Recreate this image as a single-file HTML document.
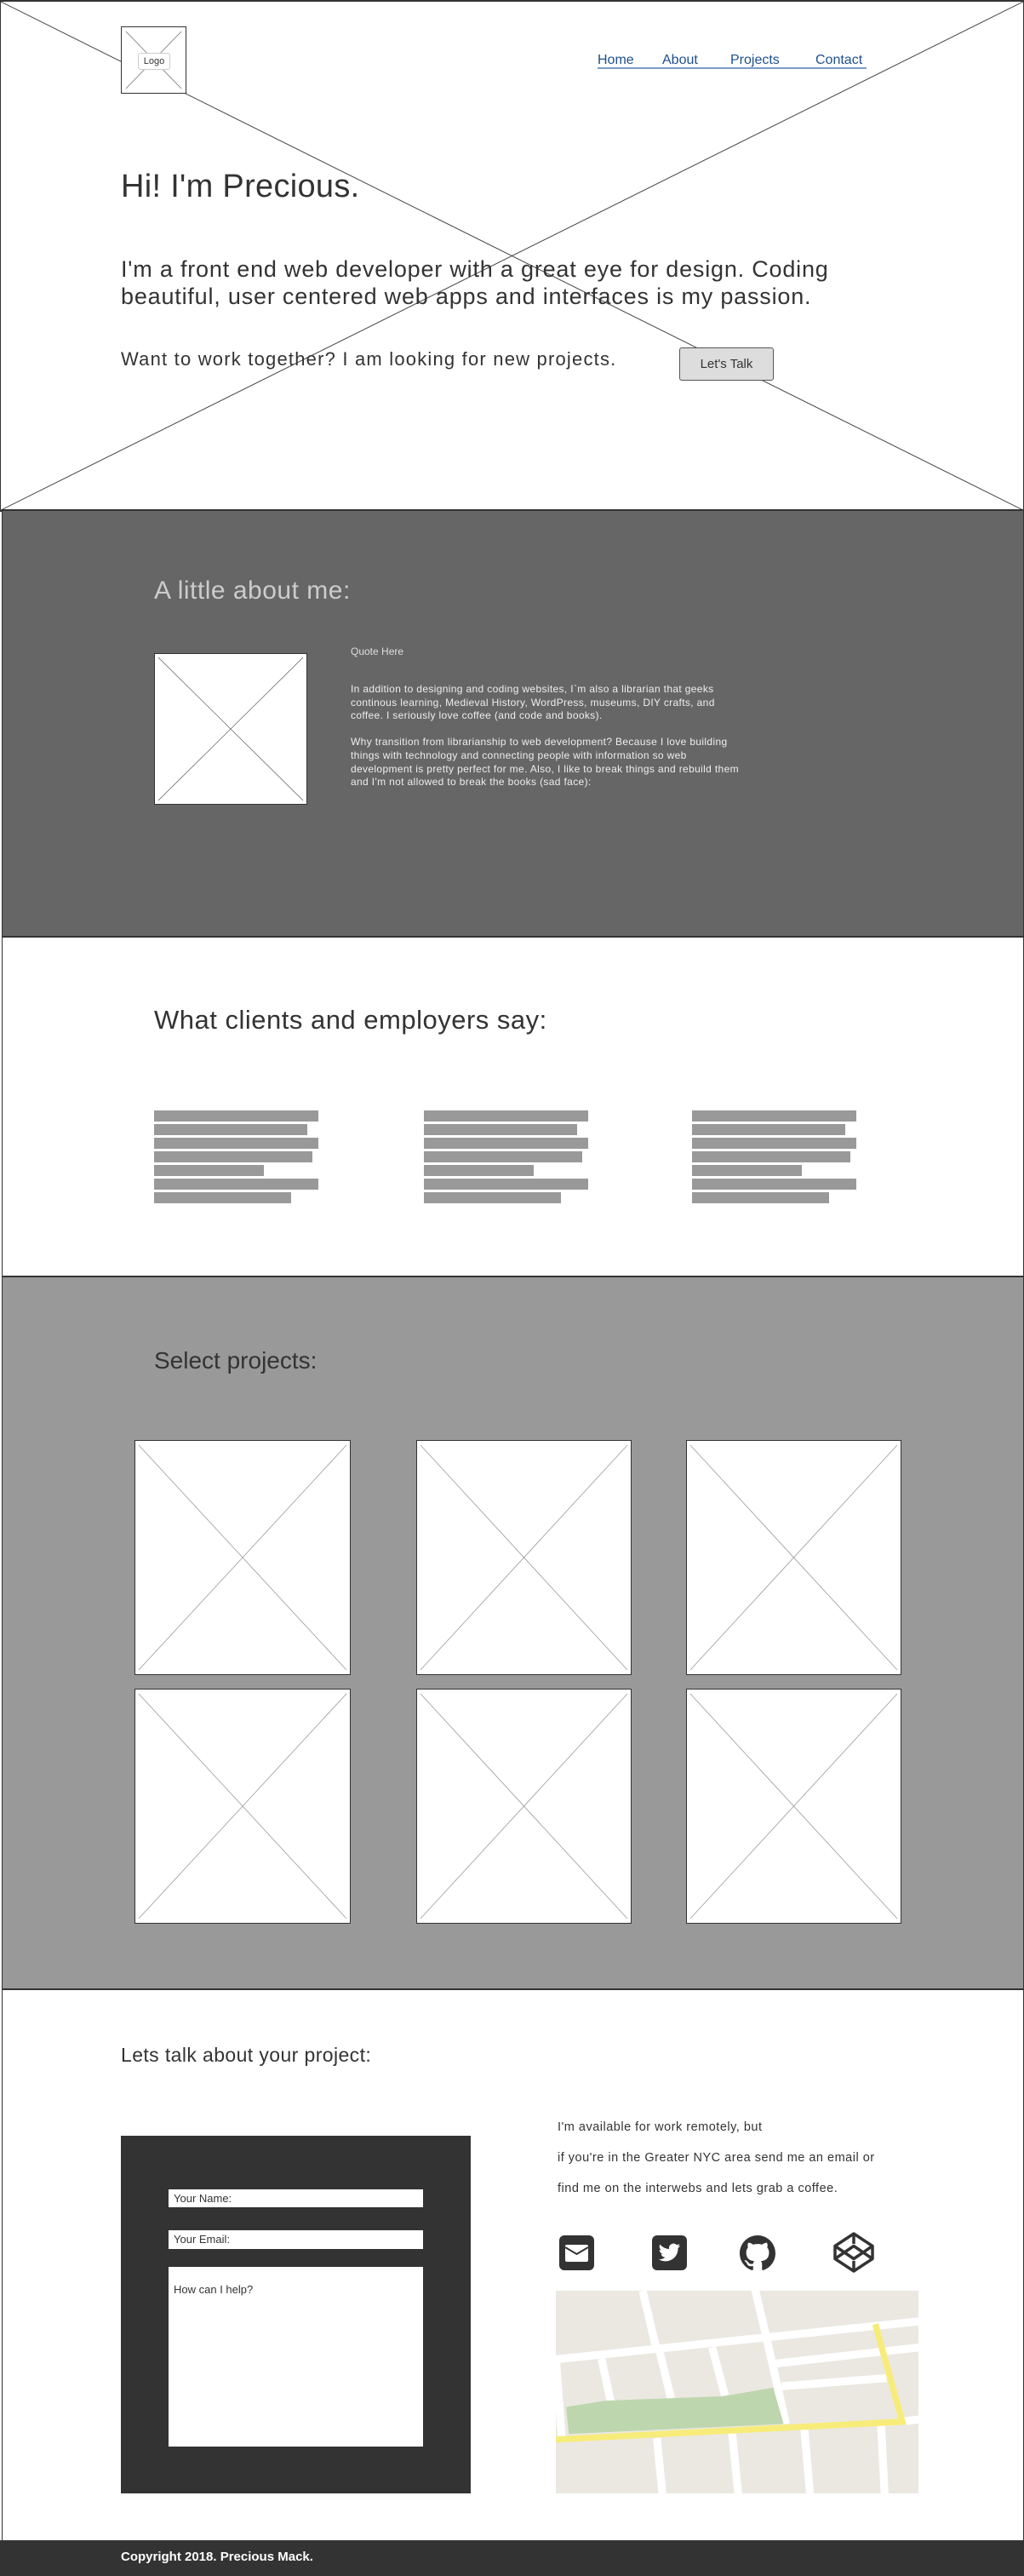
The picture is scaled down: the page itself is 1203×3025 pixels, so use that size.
<!DOCTYPE html>
<html><head><meta charset="utf-8"><style>
*{margin:0;padding:0;box-sizing:border-box}
body{width:1203px;height:3025px;position:relative;background:#fff;font-family:"Liberation Sans",sans-serif;color:#333;overflow:hidden}
.a{position:absolute}
.sec{position:absolute;left:0;width:1203px;border:1px solid #333;border-top-width:2px}
.bar{position:absolute;height:13px;background:#999}
.box{position:absolute;background:#fff;border:1px solid #333}
.box svg{position:absolute;left:0;top:0;width:100%;height:100%}
.nav a{color:#1f4f8f;text-decoration:none;font-size:16px;position:absolute;top:62px}
</style></head><body>

<!-- HERO -->
<div class="sec" style="top:0;height:601px;border-width:2px 1px 2px 1px">
<svg class="a" style="left:0;top:0" width="1201" height="597"><line x1="0" y1="0" x2="1201" y2="597" stroke="#444" stroke-width="1"/><line x1="1201" y1="0" x2="0" y2="597" stroke="#444" stroke-width="1"/></svg>
</div>
<div class="box" style="left:142px;top:31px;width:77px;height:79px;border-color:#333">
<svg viewBox="0 0 77 79" preserveAspectRatio="none"><line x1="5" y1="5" x2="72" y2="74" stroke="#666" stroke-width=".7"/><line x1="72" y1="5" x2="5" y2="74" stroke="#666" stroke-width=".7"/></svg>
<div class="a" style="left:19px;top:30px;width:38px;height:20px;border:1px solid #ccc;border-radius:3px;background:#fff;font-size:11px;text-align:center;line-height:18px">Logo</div>
</div>
<div class="nav">
<a style="left:702px">Home</a><a style="left:778px">About</a><a style="left:858px">Projects</a><a style="left:958px">Contact</a>
<div class="a" style="left:702px;top:79px;width:316px;height:2px;background:#7a9cc6"></div>
</div>
<div class="a" style="left:142px;top:198px;font-size:38px;letter-spacing:.3px;color:#333">Hi! I'm Precious.</div>
<div class="a" style="left:142px;top:300px;width:880px;font-size:27px;line-height:32px;letter-spacing:.8px;color:#333">I'm a front end web developer with a great eye for design. Coding beautiful, user centered web apps and interfaces is my passion.</div>
<div class="a" style="left:142px;top:409px;font-size:22px;letter-spacing:1.2px;color:#333">Want to work together? I am looking for new projects.</div>
<div class="a" style="left:798px;top:408px;width:111px;height:39px;background:#ddd;border:1px solid #555;border-radius:3px;font-size:15px;text-align:center;line-height:37px">Let's Talk</div>

<!-- ABOUT -->
<div class="sec" style="top:598px;height:503px;background:#666;left:2px;width:1201px"></div>
<div class="a" style="left:181px;top:677px;font-size:30px;letter-spacing:.5px;color:#ccc">A little about me:</div>
<div class="box" style="left:181px;top:767px;width:180px;height:178px">
<svg viewBox="0 0 180 178" preserveAspectRatio="none"><line x1="4" y1="4" x2="176" y2="174" stroke="#555" stroke-width=".7"/><line x1="176" y1="4" x2="4" y2="174" stroke="#555" stroke-width=".7"/></svg></div>
<div class="a" style="left:412px;top:758px;font-size:12px;color:#ddd">Quote Here</div>
<div class="a" style="left:412px;top:802px;width:468px;font-size:12px;line-height:15.6px;letter-spacing:.35px;color:#eee">In addition to designing and coding websites, I`m also a librarian that geeks continous learning, Medieval History, WordPress, museums, DIY crafts, and coffee. I seriously love coffee (and code and books).<br><br>Why transition from librarianship to web development? Because I love building things with technology and connecting people with information so web development is pretty perfect for me. Also, I like to break things and rebuild them and I'm not allowed to break the books (sad face):</div>

<!-- TESTIMONIALS -->
<div class="sec" style="top:1099px;height:402px;left:2px;width:1201px;background:#fff"></div>
<div class="a" style="left:181px;top:1180px;font-size:31px;letter-spacing:.5px;color:#333">What clients and employers say:</div>
<div class="a" style="left:181px;top:1304px">
<div class="bar" style="top:0;width:193px"></div><div class="bar" style="top:16px;width:180px"></div><div class="bar" style="top:32px;width:193px"></div><div class="bar" style="top:48px;width:186px"></div><div class="bar" style="top:64px;width:129px"></div><div class="bar" style="top:80px;width:193px"></div><div class="bar" style="top:96px;width:161px"></div></div>
<div class="a" style="left:498px;top:1304px">
<div class="bar" style="top:0;width:193px"></div><div class="bar" style="top:16px;width:180px"></div><div class="bar" style="top:32px;width:193px"></div><div class="bar" style="top:48px;width:186px"></div><div class="bar" style="top:64px;width:129px"></div><div class="bar" style="top:80px;width:193px"></div><div class="bar" style="top:96px;width:161px"></div></div>
<div class="a" style="left:813px;top:1304px">
<div class="bar" style="top:0;width:193px"></div><div class="bar" style="top:16px;width:180px"></div><div class="bar" style="top:32px;width:193px"></div><div class="bar" style="top:48px;width:186px"></div><div class="bar" style="top:64px;width:129px"></div><div class="bar" style="top:80px;width:193px"></div><div class="bar" style="top:96px;width:161px"></div></div>

<!-- PROJECTS -->
<div class="sec" style="top:1498px;height:839px;left:2px;width:1201px;background:#999"></div>
<div class="a" style="left:181px;top:1582px;font-size:28px;color:#333">Select projects:</div>
<div class="box" style="left:158px;top:1691px;width:254px;height:276px"><svg viewBox="0 0 254 276" preserveAspectRatio="none"><line x1="4" y1="5" x2="250" y2="271" stroke="#999" stroke-width=".8"/><line x1="250" y1="5" x2="4" y2="271" stroke="#999" stroke-width=".8"/></svg></div>
<div class="box" style="left:489px;top:1691px;width:253px;height:276px"><svg viewBox="0 0 254 276" preserveAspectRatio="none"><line x1="4" y1="5" x2="250" y2="271" stroke="#999" stroke-width=".8"/><line x1="250" y1="5" x2="4" y2="271" stroke="#999" stroke-width=".8"/></svg></div>
<div class="box" style="left:806px;top:1691px;width:253px;height:276px"><svg viewBox="0 0 254 276" preserveAspectRatio="none"><line x1="4" y1="5" x2="250" y2="271" stroke="#999" stroke-width=".8"/><line x1="250" y1="5" x2="4" y2="271" stroke="#999" stroke-width=".8"/></svg></div>
<div class="box" style="left:158px;top:1983px;width:254px;height:276px"><svg viewBox="0 0 254 276" preserveAspectRatio="none"><line x1="4" y1="5" x2="250" y2="271" stroke="#999" stroke-width=".8"/><line x1="250" y1="5" x2="4" y2="271" stroke="#999" stroke-width=".8"/></svg></div>
<div class="box" style="left:489px;top:1983px;width:253px;height:276px"><svg viewBox="0 0 254 276" preserveAspectRatio="none"><line x1="4" y1="5" x2="250" y2="271" stroke="#999" stroke-width=".8"/><line x1="250" y1="5" x2="4" y2="271" stroke="#999" stroke-width=".8"/></svg></div>
<div class="box" style="left:806px;top:1983px;width:253px;height:276px"><svg viewBox="0 0 254 276" preserveAspectRatio="none"><line x1="4" y1="5" x2="250" y2="271" stroke="#999" stroke-width=".8"/><line x1="250" y1="5" x2="4" y2="271" stroke="#999" stroke-width=".8"/></svg></div>

<!-- CONTACT -->
<div class="sec" style="top:2335px;height:649px;left:2px;width:1201px;background:#fff"></div>
<div class="a" style="left:142px;top:2400px;font-size:23px;letter-spacing:.4px;color:#333">Lets talk about your project:</div>
<div class="a" style="left:142px;top:2508px;width:411px;height:420px;background:#333"></div>
<div class="a" style="left:198px;top:2571px;width:299px;height:21px;background:#fff;font-size:13px;padding-left:6px;line-height:21px">Your Name:</div>
<div class="a" style="left:198px;top:2619px;width:299px;height:22px;background:#fff;font-size:13px;padding-left:6px;line-height:22px">Your Email:</div>
<div class="a" style="left:198px;top:2662px;width:299px;height:211px;background:#fff;font-size:13px;padding:19px 6px">How can I help?</div>
<div class="a" style="left:655px;top:2480px;font-size:14.5px;line-height:36px;letter-spacing:.5px;color:#333">I'm available for work remotely, but<br>if you're in the Greater NYC area send me an email or<br>find me on the interwebs and lets grab a coffee.</div>

<svg class="a" style="left:657px;top:2625px" width="41" height="41" viewBox="0 0 41 41"><rect x="0" y="0" width="41" height="41" rx="6" fill="#333"/><rect x="7" y="11" width="27" height="20" rx="2" fill="#fff"/><path d="M7 14 L20.5 22 L34 14" fill="none" stroke="#333" stroke-width="2"/></svg>
<svg class="a" style="left:766px;top:2625px" width="41" height="41" viewBox="0 0 41 41"><rect x="0" y="0" width="41" height="41" rx="6" fill="#333"/><path d="M33 12c-1 .5-2 .7-3 .9 1.1-.7 1.9-1.7 2.3-2.9-1 .6-2.1 1-3.3 1.3a5.2 5.2 0 0 0-8.9 4.7C15.8 15.8 12 13.7 9.4 10.6c-1.4 2.4-.5 5.3 1.6 6.9-.8 0-1.6-.3-2.3-.6 0 2.5 1.8 4.6 4.2 5.1-.8.2-1.600.2-2.3.1.7 2.1 2.6 3.6 4.9 3.6A10.4 10.4 0 0 1 7.8 28a14.7 14.7 0 0 0 22.7-13.1c1-.7 1.9-1.6 2.5-2.9z" fill="#fff"/></svg>
<svg class="a" style="left:869px;top:2625px" width="42" height="42" viewBox="0 0 16 16"><path fill="#333" d="M8 0C3.58 0 0 3.58 0 8c0 3.54 2.29 6.53 5.47 7.590.4.07.55-.17.55-.38 0-.19-.01-.82-.01-1.49-2.01.37-2.53-.49-2.69-.94-.09-.23-.48-.94-.82-1.13-.28-.15-.68-.52-.01-.53.63-.01 1.08.58 1.23.82.72 1.21 1.87.87 2.33.66.07-.52.28-.87.51-1.07-1.78-.2-3.64-.89-3.64-3.95 0-.87.31-1.59.82-2.150-.08-.2-.36-1.02.08-2.12 0 0 .67-.21 2.2.82.64-.18 1.32-.27 2-.27.68 0 1.36.09 2 .27 1.53-1.04 2.2-.82 2.2-.82.44 1.1.16 1.92.08 2.12.51.56.82 1.27.82 2.15 0 3.07-1.87 3.75-3.65 3.95.29.25.54.73.54 1.48 0 1.07-.01 1.93-.01 2.2 0 .21.15.46.55.38A8.013 8.013 0 0 0 16 8c0-4.42-3.58-8-8-8z"/></svg>
<svg class="a" style="left:979px;top:2621px" width="48" height="48" viewBox="0 0 48 48"><g fill="none" stroke="#333" stroke-width="3.5" stroke-linejoin="round"><path d="M24 2 L46 16.5 L46 31.5 L24 46 L2 31.5 L2 16.5 Z"/><path d="M24 2 L24 14 M24 34 L24 46 M2 16.5 L24 31.5 L46 16.5 M2 31.5 L24 16.5 L46 31.5"/></g></svg>

<svg class="a" style="left:653px;top:2690px" width="426" height="238" viewBox="39 240 1278 715" preserveAspectRatio="none">
<rect x="39" y="240" width="1278" height="715" fill="#ebe8e1"/>
<g stroke="#fff" stroke-width="28" fill="none">
<path d="M345 240 L392 440 M405 455 L445 620 M395 760 L415 960"/>
<path d="M740 230 L780 400 L850 710 M915 730 L935 960"/>
<path d="M200 480 L232 630 M590 440 L635 610 M40 490 L60 760 M660 740 L682 960 M1185 710 L1198 960"/>
<path d="M39 482 L1320 348 M815 497 L1320 440 M835 577 L1205 548 M1270 700 L1320 694"/>
</g>
<path d="M75 650 L215 628 L630 612 L805 582 L842 710 L85 745 Z" fill="#bdd6ae"/>
<path d="M39 765 L1260 702 L1165 358" fill="none" stroke="#f7ec7a" stroke-width="22"/>
</svg>

<!-- FOOTER -->
<div class="a" style="left:0;top:2983px;width:1203px;height:42px;background:#333"></div>
<div class="a" style="left:142px;top:2994px;font-size:15px;font-weight:bold;color:#fff">Copyright 2018. Precious Mack.</div>
</body></html>
